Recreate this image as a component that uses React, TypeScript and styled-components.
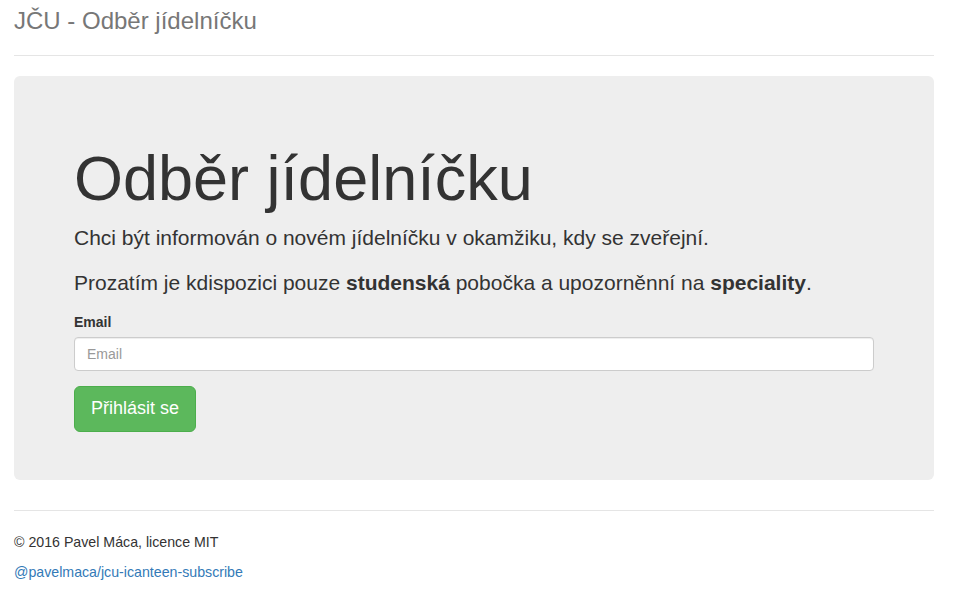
import React from 'react'
import styled, { createGlobalStyle } from 'styled-components'

const GlobalStyle = createGlobalStyle`
  html, body {
    margin: 0;
    padding: 0;
    background: #fff;
  }
  body {
    font-family: "Liberation Sans", Arial, sans-serif;
    font-size: 14px;
    line-height: 1.42857;
    color: #333;
  }
  * {
    box-sizing: border-box;
  }
`

const Container = styled.div`
  width: 950px;
  padding: 0 16px 0 14px;
`

const Header = styled.div`
  padding: 1px 0 14px;
  border-bottom: 1px solid #e5e5e5;
`

const Brand = styled.h3`
  margin: 0;
  font-size: 24px;
  font-weight: 500;
  line-height: 40px;
  color: #777;
`

const Jumbotron = styled.div`
  margin: 20px 0 30px;
  padding: 48px 60px;
  background: #eee;
  border-radius: 6px;
`

const Title = styled.h1`
  margin: 20px 0 10px;
  font-size: 63px;
  font-weight: 500;
  line-height: 1.1;
  color: #333;
`

const Lead = styled.p`
  margin: 0 0 15px;
  font-size: 21px;
  font-weight: 400;
  line-height: 30px;
`

const FormGroup = styled.div`
  margin-bottom: 15px;
`

const Label = styled.label`
  display: inline-block;
  margin-bottom: 4px;
  font-weight: 700;
`

const Input = styled.input`
  display: block;
  width: 800px;
  height: 34px;
  padding: 6px 12px;
  font-family: inherit;
  font-size: 14px;
  color: #555;
  background: #fff;
  border: 1px solid #ccc;
  border-radius: 4px;
  box-shadow: inset 0 1px 1px rgba(0, 0, 0, 0.075);
  outline: none;

  &::placeholder {
    color: #999;
  }
`

const Button = styled.button<{ $variant?: 'success' }>`
  display: inline-block;
  padding: 10px 16px;
  font-family: inherit;
  font-size: 18px;
  line-height: 1.3333;
  color: #fff;
  background: ${p => (p.$variant === 'success' ? '#5cb85c' : '#337ab7')};
  border: 1px solid ${p => (p.$variant === 'success' ? '#4cae4c' : '#2e6da4')};
  border-radius: 6px;
  cursor: pointer;
`

const Footer = styled.footer`
  padding-top: 21px;
  border-top: 1px solid #e5e5e5;
  color: #333;
  font-size: 14.2px;

  p {
    margin: 0 0 10px;
    line-height: 20px;
  }
  a {
    color: #337ab7;
    text-decoration: none;
  }
`

export default function App() {
  return (
    <>
      <GlobalStyle />
      <Container>
        <Header>
          <Brand>JČU - Odběr jídelníčku</Brand>
        </Header>

        <Jumbotron>
          <Title>Odběr jídelníčku</Title>
          <Lead>Chci být informován o novém jídelníčku v okamžiku, kdy se zveřejní.</Lead>
          <Lead>
            Prozatím je kdispozici pouze <strong>studenská</strong> pobočka a upozorněnní na{' '}
            <strong>speciality</strong>.
          </Lead>
          <form onSubmit={e => e.preventDefault()}>
            <FormGroup>
              <Label htmlFor="email">Email</Label>
              <Input id="email" type="email" placeholder="Email" />
            </FormGroup>
            <Button type="submit" $variant="success">Přihlásit se</Button>
          </form>
        </Jumbotron>

        <Footer>
          <p>© 2016 Pavel Máca, licence MIT</p>
          <p>
            <a href="#">@pavelmaca/jcu-icanteen-subscribe</a>
          </p>
        </Footer>
      </Container>
    </>
  )
}
